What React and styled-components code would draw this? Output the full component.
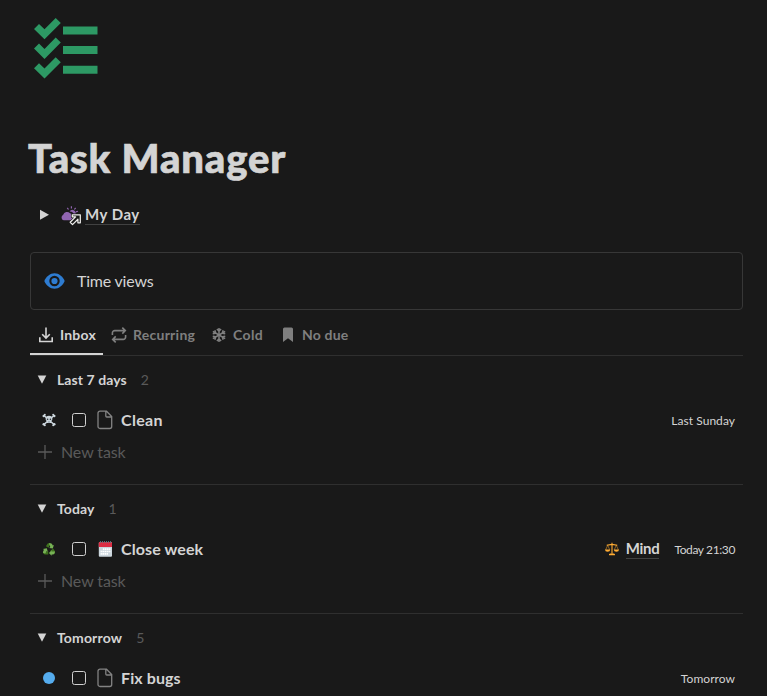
import React from 'react';
import styled, { createGlobalStyle } from 'styled-components';

const Global = createGlobalStyle`
  * { box-sizing: border-box; }
  html, body { margin: 0; background: #191919; overflow: hidden; }
  body { font-family: Lato, "Liberation Sans", sans-serif; color: #d4d4d4; }
  svg { display: block; flex: none; }
`;

const Page = styled.main`
  height: 696px;
  overflow: hidden;
  padding: 14px 24px 0 30px;
  background: #191919;
`;

const PageIcon = styled.div`
  height: 117px;
`;

const Title = styled.h1`
  margin: 0 0 0 -2px;
  height: 54px;
  font-size: 40px;
  line-height: 54px;
  font-weight: 900;
  letter-spacing: 0.85px;
  -webkit-text-stroke: 0.7px #d4d4d4;
  white-space: nowrap;
`;

const ToggleLine = styled.div`
  display: flex;
  align-items: center;
  height: 30px;
  margin-top: 15px;
  padding-left: 9px;
`;

const MyDayIcon = styled.span`
  margin-left: 11px;
  margin-right: 4px;
`;

const Link = styled.a`
  font-size: 15px;
  line-height: 19px;
  height: 20px;
  font-weight: 700;
  letter-spacing: ${(p) => p.$ls || 0}px;
  border-bottom: 1px solid #414141;
  white-space: nowrap;
`;

const Callout = styled.section`
  display: flex;
  align-items: center;
  gap: 12px;
  height: 58px;
  margin-top: 22px;
  padding-left: 13px;
  border: 1px solid #373737;
  border-radius: 4px;
`;

const CalloutText = styled.span`
  padding-bottom: 2px;
  font-size: 16px;
  letter-spacing: -0.2px;
`;

const Tabs = styled.nav`
  display: flex;
  height: 46px;
  border-bottom: 1px solid #2f2f2f;
`;

const Tab = styled.div`
  display: flex;
  align-items: center;
  gap: 6px;
  height: 45px;
  width: ${(p) => p.$w}px;
  padding: 6px 0 0 8px;
  font-size: 14px;
  font-weight: 700;
  letter-spacing: ${(p) => p.$ls || 0}px;
  white-space: nowrap;
  color: ${(p) => (p.$active ? '#d4d4d4' : '#7f7f7f')};
  border-bottom: 2px solid ${(p) => (p.$active ? '#d4d4d4' : 'transparent')};
`;

const Group = styled.section`
  height: 129px;
  border-bottom: 1px solid #2f2f2f;
`;

const GroupHeader = styled.header`
  display: flex;
  align-items: center;
  height: 48px;
  padding-left: 7px;
`;

const GroupName = styled.h2`
  margin: 0 14px 0 10px;
  padding-bottom: 2px;
  font-size: 14px;
  font-weight: 700;
  letter-spacing: ${(p) => p.$ls || 0}px;
`;

const Count = styled.span`
  padding-bottom: 2px;
  font-size: 14px;
  color: #5a5a5a;
`;

const Row = styled.div`
  display: flex;
  align-items: center;
  height: 33px;
  padding: 0 8px 2px 12px;
`;

const Checkbox = styled.span`
  flex: none;
  width: 14px;
  height: 14px;
  margin: 0 11px 0 16px;
  border: 1px solid #d0d0d0;
  border-radius: 2.5px;
`;

const TaskName = styled.span`
  margin-left: 8px;
  flex: 1;
  font-size: 16px;
  font-weight: 700;
  letter-spacing: ${(p) => p.$ls || 0}px;
`;

const Area = styled.span`
  display: flex;
  align-items: center;
  gap: 7px;
  margin-right: 15px;
`;

const Due = styled.span`
  font-size: 12px;
  padding-top: 1px;
  letter-spacing: ${(p) => p.$ls || 0}px;
`;

const NewTask = styled.div`
  display: flex;
  align-items: center;
  gap: 9px;
  height: 30px;
  padding-left: 8px;
  font-size: 16px;
  letter-spacing: -0.1px;
  color: #5a5a5a;
`;

const NewTaskLabel = styled.span`
  padding-bottom: 1px;
`;

const ChecklistIcon = () => (
  <svg width="72" height="68" viewBox="30 14 72 68" fill="#2d9964">
    {[0, 19.6, 39.2].map((dy) => (
      <g key={dy} transform={`translate(0 ${dy})`}>
        <path d="M34 29 39 24 44.5 29.3 55.7 18 60.8 23 44.5 39.3Z" />
        <path d="M63 26.5H97.5V34.5H63Z" />
      </g>
    ))}
  </svg>
);

const RightCaret = () => (
  <svg width="11" height="12" viewBox="0 0 11 12" fill="#d4d4d4"><path d="M1 .8 10 5.7 1 10.8Z" /></svg>
);

const DownCaret = () => (
  <svg width="10" height="12" viewBox="0 0 10 12" fill="#d4d4d4"><path d="M.7 1.5H9.3L5 9.8Z" /></svg>
);

const CloudSunIcon = () => (
  <svg width="20" height="20" viewBox="0 0 20 20" overflow="visible">
    <g fill="#9065b0">
      <path d="M2.6 15.2a2.9 2.9 0 0 1-.4-5.4A4 4 0 0 1 9 8.2a3.3 3.3 0 0 1 3 2.6 2.3 2.3 0 0 1 .8 4.4Z" />
      <path d="M8.6 6.4a3.3 3.3 0 0 1 5.4 3.8l-1.1.4a4.3 4.3 0 0 0-4.3-4.2Z" />
    </g>
    <path d="M10.4 1.2v2.4M6.3 2.8l1.2 1.7M14.6 2.8l-1.2 1.7M17 6.2l-2 .7" stroke="#9065b0" strokeWidth="1.2" fill="none" />
    <path d="M11.3 9.4h8v8h-2.4v-3.6l-5.4 5.4-2.3-2.3 5.4-5.4h-3.3Z" transform="translate(0 .4)" stroke="#191919" strokeWidth="2.4" fill="#191919" />
    <path d="M11.3 9.4h8v8h-2.4v-3.6l-5.4 5.4-2.3-2.3 5.4-5.4h-3.3Z" transform="translate(0 .4)" stroke="#f0efed" strokeWidth="1.25" strokeLinejoin="round" fill="#191919" />
  </svg>
);

const EyeIcon = () => (
  <svg width="21" height="18" viewBox="0 0 21 18">
    <path d="M.3 9C2.4 4.4 6 1.3 10.5 1.3S18.6 4.4 20.7 9C18.6 13.6 15 16.7 10.5 16.7S2.4 13.6.3 9Z" fill="#2e7cd1" />
    <circle cx="10.5" cy="9" r="5.2" fill="#191919" />
    <circle cx="10.5" cy="9" r="3.1" fill="#2e7cd1" />
  </svg>
);

const InboxIcon = () => (
  <svg width="16" height="16" viewBox="0 0 16 16" fill="none" stroke="currentColor" strokeWidth="1.6">
    <path d="M8 .5v10.2M4.2 7.2 8 11l3.8-3.8M1.8 10.2v4.3h12.4v-4.3" />
  </svg>
);

const RepeatIcon = () => (
  <svg width="16" height="16" viewBox="0 0 16 16" fill="none" stroke="currentColor" strokeWidth="1.6">
    <path d="M1.4 8V6A2.4 2.4 0 0 1 3.8 3.6H14M11.3.6l3 3-3 3M14.6 8v2a2.4 2.4 0 0 1-2.4 2.4H2M4.7 9.4l-3 3 3 3" />
  </svg>
);

const SnowIcon = () => (
  <svg width="16" height="16" viewBox="0 0 16 16" fill="none" stroke="currentColor" strokeWidth="1.5">
    {[0, 60, 120, 180, 240, 300].map((a) => (
      <path key={a} transform={`rotate(${a} 8 8)`} d="M8 8V.9M5.9 2 8 4.2 10.1 2" />
    ))}
  </svg>
);

const BookmarkIcon = () => (
  <svg width="16" height="16" viewBox="0 0 16 16" fill="currentColor">
    <path d="M4.5.6h7a1.5 1.5 0 0 1 1.5 1.5v13L8 11.2 3 15.1v-13A1.5 1.5 0 0 1 4.5.6Z" />
  </svg>
);

const PageGlyph = () => (
  <svg width="16" height="20" viewBox="0 0 16 20" fill="none" stroke="#838383" strokeWidth="1.3">
    <path d="M3 1.2H9.5L14.7 6.5V16.5a2 2 0 0 1-2 2H3a2 2 0 0 1-2-2V3.2a2 2 0 0 1 2-2ZM8.8 1.2V6a1 1 0 0 0 1 1h4.9" />
  </svg>
);

const CalendarIcon = () => (
  <svg width="16" height="20" viewBox="0 0 16 20">
    <rect x="1.8" y="3" width="13.2" height="14.8" rx="1" fill="#ccd6dd" />
    <path d="M1.8 8V4a1 1 0 0 1 1-1H14a1 1 0 0 1 1 1v4Z" fill="#dd2e44" />
    <path d="M3.5 4V2M5.5 4V2M7.5 4V2M9.5 4V2M11.5 4V2M13.5 4V2" stroke="#66757f" strokeWidth=".9" />
    <path d="M5.8 9.2h7.6v1.8H5.8ZM3.6 11.7h9.8v1.6H3.6ZM3.6 14h7.5v1.8H3.6Z" fill="#fff" />
    <path d="M5.3 9v7M7.5 9v7M9.6 9v7M11.7 9v7" stroke="#ccd6dd" strokeWidth=".5" />
  </svg>
);

const SkullIcon = () => (
  <svg width="14" height="14" viewBox="0 0 14 14">
    <path d="M2 2.5 12 11.5M12 2.5 2 11.5" stroke="#ccd6dd" strokeWidth="1.6" />
    <g fill="#ccd6dd">
      <circle cx="1.7" cy="3" r="1.2" /><circle cx="2.8" cy="1.8" r="1" />
      <circle cx="12.3" cy="3" r="1.2" /><circle cx="11.2" cy="1.8" r="1" />
      <circle cx="1.7" cy="11.2" r="1.2" /><circle cx="2.8" cy="12.3" r="1" />
      <circle cx="12.3" cy="11.2" r="1.2" /><circle cx="11.2" cy="12.3" r="1" />
      <path d="M3.6 5.8a3.4 3 0 0 1 6.8 0c0 1.3-.5 2-1.3 2.4V10H4.9V8.2C4.1 7.8 3.6 7 3.6 5.8Z" />
    </g>
    <circle cx="5.6" cy="6.2" r=".8" fill="#292f33" /><circle cx="8.4" cy="6.2" r=".8" fill="#292f33" />
    <path d="M6 9h2" stroke="#66757f" strokeWidth=".7" />
  </svg>
);

const RecycleIcon = () => (
  <svg width="14" height="14" viewBox="0 0 14 14">
    <path d="M3.9 4.3 5.3 2a1.4 1.4 0 0 1 1.3-.7h1.9L6.6 5.8Z" fill="#3e721d" />
    <path d="M6.8 1.2h1.7a1.7 1.7 0 0 1 1.5.9l.8 1.3 1.1-.5-1.1 3.7-3.7-.7 1.2-.8Z" fill="#77b255" />
    <path d="m11.2 6.5 1.6 2.6a1.6 1.6 0 0 1 0 1.6l-.6 1-3.9-2.9Z" fill="#3e721d" />
    <path d="M12.5 11.4a2 2 0 0 1-1.7 1H9.6v1.3L6.9 10.9l2.7-2.7v1.2h3.4Z" fill="#77b255" />
    <path d="M6.3 9.3v3.2H3.1a1.7 1.7 0 0 1-1.5-.8L.8 10Z" fill="#3e721d" />
    <path d="M1.2 11a1.8 1.8 0 0 1 0-1.8L2 7.7l-1.1-.6 3.9-.9 1 3.5-1.1-.6-1.5 2.3Z" fill="#77b255" />
  </svg>
);

const DotIcon = () => (
  <svg width="14" height="14" viewBox="0 0 14 14"><circle cx="7" cy="7" r="6" fill="#55acee" /></svg>
);

const ScalesIcon = () => (
  <svg width="14" height="14" viewBox="0 0 14 14" fill="none" stroke="#ffac33">
    <path d="M7 .8v11M1.7 3.2 7 2.4l5.3.8" strokeWidth="1.1" />
    <path d="M2.7 3.2.7 7.8M2.7 3.2l2 4.6M11.3 3.2l-2 4.6M11.3 3.2l2 4.6" strokeWidth=".5" />
    <path d="M0 7.5h5.2a2.6 2.2 0 0 1-5.2 0ZM8.8 7.5H14a2.6 2.2 0 0 1-5.2 0ZM4 13.2h6a1.4 1.4 0 0 0-1.4-1.8H5.4A1.4 1.4 0 0 0 4 13.2Z" fill="#ffac33" stroke="none" />
  </svg>
);

const PlusIcon = () => (
  <svg width="14" height="14" viewBox="0 0 14 14" stroke="#5a5a5a" strokeWidth="1.3"><path d="M7 0v14M0 7h14" /></svg>
);

const tabs = [
  { label: 'Inbox', Icon: InboxIcon, w: 73, ls: 0.2, active: true },
  { label: 'Recurring', Icon: RepeatIcon, w: 100, ls: 0.25 },
  { label: 'Cold', Icon: SnowIcon, w: 69, ls: 0.4 },
  { label: 'No due', Icon: BookmarkIcon, w: 90, ls: 0.2 },
];

const groups = [
  { name: 'Last 7 days', count: 2, ls: 0.08, Status: SkullIcon, Glyph: PageGlyph, task: 'Clean', taskLs: 0.3, due: 'Last Sunday', dueLs: 0.05, canAdd: true },
  { name: 'Today', count: 1, ls: 0.1, Status: RecycleIcon, Glyph: CalendarIcon, task: 'Close week', taskLs: 0.1, due: 'Today 21:30', dueLs: -0.38, area: 'Mind', canAdd: true },
  { name: 'Tomorrow', count: 5, ls: 0.15, Status: DotIcon, Glyph: PageGlyph, task: 'Fix bugs', taskLs: 0.1, due: 'Tomorrow', dueLs: 0.05 },
];

export default function App() {
  return (
    <Page>
      <Global />
      <PageIcon><ChecklistIcon /></PageIcon>
      <Title>Task Manager</Title>
      <ToggleLine>
        <RightCaret />
        <MyDayIcon><CloudSunIcon /></MyDayIcon>
        <Link $ls={0.5}>My Day</Link>
      </ToggleLine>
      <Callout><EyeIcon /><CalloutText>Time views</CalloutText></Callout>
      <Tabs>
        {tabs.map(({ label, Icon, w, ls, active }) => (
          <Tab key={label} $w={w} $ls={ls} $active={active}><Icon />{label}</Tab>
        ))}
      </Tabs>
      {groups.map(({ name, count, ls, Status, Glyph, task, taskLs, due, dueLs, area, canAdd }) => (
        <Group key={name}>
          <GroupHeader>
            <DownCaret />
            <GroupName $ls={ls}>{name}</GroupName>
            <Count>{count}</Count>
          </GroupHeader>
          <Row>
            <Status />
            <Checkbox />
            <Glyph />
            <TaskName $ls={taskLs}>{task}</TaskName>
            {area && <Area><ScalesIcon /><Link $ls={-0.3}>{area}</Link></Area>}
            <Due $ls={dueLs}>{due}</Due>
          </Row>
          {canAdd && <NewTask><PlusIcon /><NewTaskLabel>New task</NewTaskLabel></NewTask>}
        </Group>
      ))}
    </Page>
  );
}
